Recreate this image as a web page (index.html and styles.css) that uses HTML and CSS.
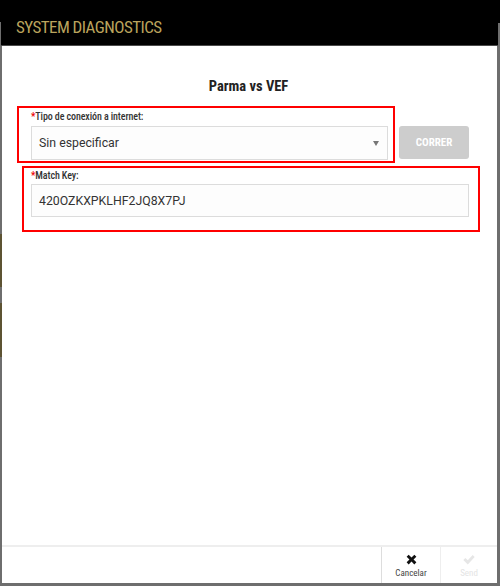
FILE: index.html
```html
<!DOCTYPE html>
<html>
<head>
<meta charset="utf-8">
<link rel="stylesheet" href="styles.css">
</head>
<body>
<div class="page">
  <header class="topbar">
    <h1 class="title">SYSTEM DIAGNOSTICS</h1>
  </header>
  <div class="modal">
    <span class="edge edge-a"></span>
    <span class="edge edge-b"></span>
    <main class="content">
      <h2 class="match">Parma vs VEF</h2>
      <div class="row">
        <div class="field field-type">
          <label class="label"><span class="req">*</span>Tipo de conexión a internet:</label>
          <div class="select">
            <span class="value">Sin especificar</span>
            <span class="caret"></span>
          </div>
        </div>
        <button class="run">CORRER</button>
      </div>
      <div class="field field-key">
        <label class="label"><span class="req">*</span>Match Key:</label>
        <div class="input"><span class="value">420OZKXPKLHF2JQ8X7PJ</span></div>
      </div>
    </main>
    <footer class="footer">
      <div class="action cancel">
        <svg class="icon" viewBox="0 0 16 16" width="13" height="13"><path d="M2 4.5 4.5 2 8 5.5 11.5 2 14 4.5 10.5 8 14 11.5 11.5 14 8 10.5 4.5 14 2 11.5 5.5 8Z" fill="#111"/></svg>
        <span class="action-text">Cancelar</span>
      </div>
      <div class="action send">
        <svg class="icon" viewBox="0 0 16 16" width="14" height="13"><path d="M1 8.5 3.5 6 6.5 9 12.5 2.5 15 5 6.5 14Z" fill="#e6e6e6"/></svg>
        <span class="action-text">Send</span>
      </div>
    </footer>
  </div>
</div>
</body>
</html>
```

FILE: styles.css
```css
* { box-sizing: border-box; }
html, body { margin: 0; padding: 0; }
body {
  width: 500px;
  height: 586px;
  background: #6e6e6e;
  font-family: Roboto, "Liberation Sans", Arial, sans-serif;
  overflow: hidden;
}
.page {
  height: 586px;
  display: flex;
  flex-direction: column;
}
.topbar {
  position: relative;
  height: 46px;
  background: #000;
  border-bottom: 1px solid #4a4a4a;
  display: flex;
  align-items: center;
  padding: 0 0 0 16px;
}
.topbar::before,
.topbar::after {
  content: "";
  position: absolute;
  bottom: -1px;
  width: 2px;
  background: #6e6e6e;
}
.topbar::before { left: 0; width: 1px; height: 24px; }
.topbar::after { right: 0; height: 23px; }
.title {
  margin: 0;
  font-family: "Roboto Condensed", "Liberation Sans Narrow", Roboto, sans-serif;
  font-stretch: condensed;
  font-weight: 400;
  font-size: 17px;
  letter-spacing: -0.55px;
  color: #bba45d;
  padding-top: 8px;
}
.modal {
  position: relative;
  flex: 1;
  margin: 0 3px 3px 2px;
  background: #fff;
  display: flex;
  flex-direction: column;
}
.edge {
  position: absolute;
  left: -2px;
  width: 2px;
  background: #5d5333;
}
.edge-a { top: 188px; height: 53px; }
.edge-b { top: 257px; height: 54px; }
.content {
  flex: 1;
  padding: 32px 0 0 15px;
}
.match {
  margin: 0 0 10px 0;
  text-align: center;
  font-family: "Roboto Condensed", "Liberation Sans Narrow", Roboto, sans-serif;
  font-stretch: condensed;
  font-size: 14.5px;
  font-weight: 700;
  color: #222;
  padding-right: 17px;
  line-height: 18px;
}
.row {
  display: flex;
  align-items: flex-start;
  gap: 4px;
}
.field {
  border: 2px solid #f00;
  display: flex;
  flex-direction: column;
}
.field-type {
  width: 378px;
  padding: 3px 5px 1px 12px;
}
.field-key {
  width: 458px;
  margin: 3px 0 0 5px;
  padding: 2px 9px 13px 7px;
}
.field-type .label { margin-bottom: 3px; }
.field-key .label { margin-bottom: 2px; }
.label {
  font-family: "Roboto Condensed", "Liberation Sans Narrow", Roboto, sans-serif;
  font-stretch: condensed;
  font-weight: 500;
  font-size: 10px;
  line-height: 12px;
  color: #333;
  letter-spacing: -0.1px;
}
.req { color: #e00; }
.select, .input {
  height: 34px;
  border: 1px solid #dcdcdc;
  background: #fdfdfd;
  display: flex;
  align-items: center;
  padding: 0 7px;
  font-size: 12.3px;
  color: #333;
}
.input { height: 33px; }
.select { justify-content: space-between; }
.caret {
  width: 0; height: 0;
  border-left: 3.5px solid transparent;
  border-right: 3.5px solid transparent;
  border-top: 5px solid #777;
  margin-right: 1px;
}
.run {
  margin-top: 20px;
  width: 70px;
  height: 33px;
  border: none;
  border-radius: 3px;
  background: #cdcdcd;
  color: #fff;
  font-family: "Roboto Condensed", "Liberation Sans Narrow", Roboto, sans-serif;
  font-stretch: condensed;
  font-weight: 700;
  font-size: 11px;
  padding: 0;
}
.footer {
  height: 38px;
  border-top: 2px solid #eeeeee;
  display: flex;
  justify-content: flex-end;
}
.action {
  display: flex;
  flex-direction: column;
  align-items: center;
  justify-content: center;
  padding-top: 2px;
  border-left: 1px solid #dddddd;
}
.cancel { width: 59px; }
.send { width: 57px; border-left-color: #eeeeee; }
.icon { display: block; margin-bottom: 2px; }
.action-text {
  font-family: "Roboto Condensed", "Liberation Sans Narrow", Roboto, sans-serif;
  font-stretch: condensed;
  font-size: 9px;
  line-height: 11px;
  color: #444;
}
.send .action-text { color: #e4e4e4; }
```
